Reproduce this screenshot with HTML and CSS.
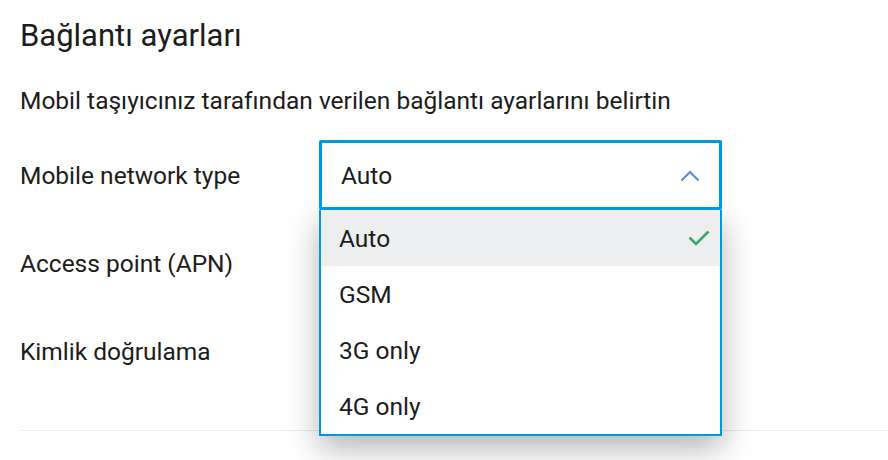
FILE: index.html
```html
<!DOCTYPE html>
<html lang="tr">
<head>
<meta charset="utf-8">
<link rel="stylesheet" href="styles.css">
</head>
<body>
<div class="page">
  <h1 class="title">Bağlantı ayarları</h1>
  <p class="desc">Mobil taşıyıcınız tarafından verilen bağlantı ayarlarını belirtin</p>
  <div class="form">
    <div class="row">
      <div class="label">Mobile network type</div>
      <div class="control">
        <div class="select">
          <span class="value">Auto</span>
          <svg class="chev" width="20" height="12" viewBox="0 0 20 12"><path d="M1.5 10.5 L10 2 L18.5 10.5" fill="none" stroke="#5b8fcf" stroke-width="2.2"/></svg>
        </div>
        <ul class="menu">
          <li class="opt active"><span>Auto</span><svg class="check" width="22" height="16" viewBox="0 0 22 16"><path d="M1.5 7.5 L8 14 L20.5 1.5" fill="none" stroke="#3aa86c" stroke-width="2.6"/></svg></li>
          <li class="opt"><span>GSM</span></li>
          <li class="opt"><span>3G only</span></li>
          <li class="opt"><span>4G only</span></li>
        </ul>
      </div>
    </div>
    <div class="row">
      <div class="label">Access point (APN)</div>
      <div class="control"></div>
    </div>
    <div class="row">
      <div class="label">Kimlik doğrulama</div>
      <div class="control"></div>
    </div>
  </div>
  <div class="divider"></div>
</div>
</body>
</html>
```
FILE: styles.css
```css
* { box-sizing: border-box; }
html, body { margin: 0; padding: 0; background: #fff; }
body {
  font-family: Roboto, "Noto Sans", sans-serif;
  color: #1c1c1c;
  width: 888px;
  height: 460px;
  overflow: hidden;
}
.page { padding: 17px 0 0 20px; }
.title {
  margin: 0;
  font-size: 31px;
  line-height: 38px;
  font-weight: 400;
}
.desc {
  margin: 30.5px 0 0;
  font-size: 24.5px;
  line-height: 29px;
}
.form {
  margin-top: 25.5px;
  display: flex;
  flex-direction: column;
  gap: 18px;
}
.row {
  display: grid;
  grid-template-columns: 299px 403px;
  height: 70px;
  align-items: center;
}
.label { font-size: 24.5px; line-height: 29px; }
.control { position: relative; height: 70px; }
.select {
  height: 70px;
  border: 3px solid #0099da;
  border-radius: 2px;
  display: flex;
  align-items: center;
  justify-content: space-between;
  padding: 0 19px 0 19px;
  font-size: 24.5px;
  background: #fff;
  position: relative;
  z-index: 3;
}
.chev { display: block; margin-top: 2px; }
.menu {
  position: absolute;
  left: 0;
  top: 70px;
  width: 403px;
  margin: 0;
  padding: 0;
  list-style: none;
  background: #fff;
  border: 2px solid #0099da;
  border-top: none;
  box-shadow: 0 12px 30px rgba(0,0,0,0.3);
  z-index: 2;
}
.opt {
  height: 56px;
  display: flex;
  align-items: center;
  justify-content: space-between;
  padding: 0 10px 0 18px;
  font-size: 24.5px;
}
.opt.active { background: #edeef0; }
.check { display: block; }
.divider {
  margin-top: 44px;
  height: 1px;
  background: #ebebeb;
}
```
